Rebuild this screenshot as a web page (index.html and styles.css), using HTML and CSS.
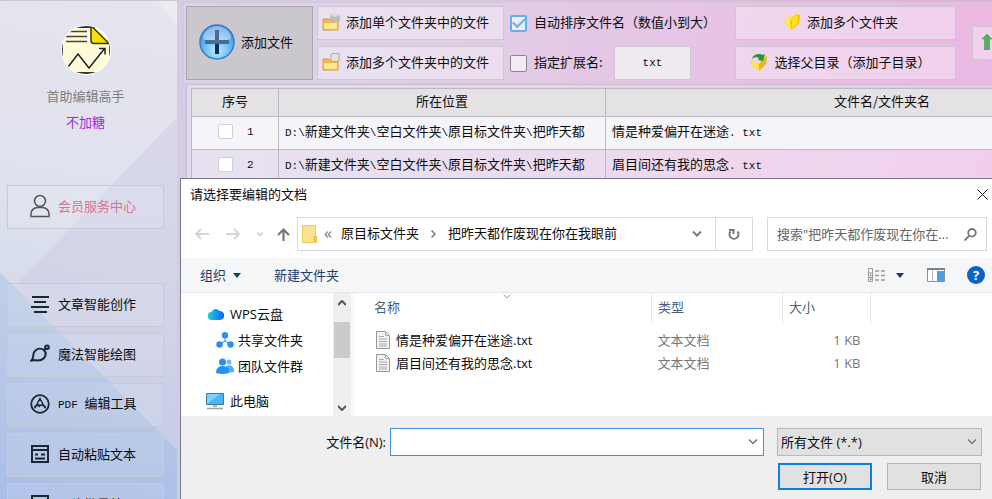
FILE: index.html
```
<!DOCTYPE html>
<html lang="zh-CN">

<head>
    <meta charset="UTF-8">
    <meta name="viewport" content="width=device-width, initial-scale=1">
    <title>首助编辑高手</title>
    <link rel="stylesheet" href="styles.css">
</head>

<body>

    <aside class="sidebar">
        <svg class="facets" viewBox="0 0 180 499" preserveAspectRatio="none" aria-hidden="true">
            <polygon points="160,0 180,0 180,24" fill="#ffffff" fill-opacity=".3" />
            <polygon points="180,116 50,250 14,286 180,450" fill="#cdc9e4" fill-opacity=".45" />
            <polygon points="0,272 14,286 180,450 180,499 0,499" fill="#93abdf" fill-opacity=".3" />
        </svg>

        <svg class="logo" viewBox="0 0 50 50" aria-hidden="true">
            <circle cx="25" cy="25" r="25" fill="#fff" />
            <clipPath id="disc">
                <circle cx="25" cy="25" r="24" />
            </clipPath>
            <g clip-path="url(#disc)">
                <rect x="1" y="2" width="48" height="46" fill="#fffbd8" stroke="#333" stroke-width="2" />
                <path d="M7 6.500H26M5 11.500H26M5 16.500H26" stroke="#444" stroke-width="1.500" />
                <path d="M30 2h1.500L48 18.500H33q-3 0-3-3z" fill="#f8e000" stroke="#333" stroke-width="1.500" />
                <path d="M7 42l10-13 11 14 16-20M38 23.500h6v6" fill="none" stroke="#222" stroke-width="1.500" />
            </g>
        </svg>
        <h1 class="app-name">首助编辑高手</h1>
        <p class="user-name">不加糖</p>

        <button class="side-btn member">
            <svg viewBox="0 0 20 24" fill="none" stroke="#555" stroke-width="1.500" aria-hidden="true">
                <circle cx="10" cy="7" r="5.500" />
                <path d="M1 22.500v-2.500a6.500 6.500 0 0 1 6.500-6.500h5a6.500 6.500 0 0 1 6.500 6.500v2.500z" />
            </svg>
            会员服务中心
        </button>

        <nav class="side-nav">
            <button class="side-btn">
                <svg viewBox="0 0 20 20" stroke="#1c2533" stroke-width="2" aria-hidden="true">
                    <path d="M2 3h17M4 8h12M1 13h18M4 18h13" />
                </svg>
                文章智能创作
            </button>
            <button class="side-btn">
                <svg viewBox="0 0 20 20" fill="none" stroke="#1c2533" stroke-width="2" aria-hidden="true">
                    <path d="M1.500 16.500C4.500 13.500 2 11 4.500 7.500 7 4 11 4 14 6c2.500 3 2 6-.5 8.500-3.500 3.500-7.500 1-12 2zM14 6l1.500-1.500" />
                    <circle cx="17" cy="3.200" r="1.800" />
                </svg>
                魔法智能绘图
            </button>
            <button class="side-btn">
                <svg viewBox="0 0 20 20" fill="none" stroke="#1c2533" stroke-width="1.800" aria-hidden="true">
                    <circle cx="10" cy="10" r="8.800" />
                    <path d="M5 14L10 4.500 15 14M5 14c-1-2 2-3 5-3s6 1 5 3M7.500 10.500L10 13" stroke-width="1.500" />
                </svg>
                <span><span class="mono">PDF </span>编辑工具</span>
            </button>
            <button class="side-btn">
                <svg viewBox="0 0 20 20" fill="none" stroke="#1c2533" stroke-width="2" aria-hidden="true">
                    <path d="M2 2h16v16H2zM2 6h16" />
                    <path d="M5 10.500h3M11 10.500h4M5 14.500h10" />
                </svg>
                自动粘贴文本
            </button>
            <button class="side-btn">
                <svg viewBox="0 0 20 20" fill="none" stroke="#1c2533" stroke-width="2" aria-hidden="true">
                    <path d="M2 2h16v16H2zM2 6h16M6 14l3-4 5 5" />
                </svg>
                图片批量处理
            </button>
        </nav>
    </aside>

    <main class="workspace">
        <section class="toolbar">
            <button class="add-file">
                <svg viewBox="0 0 36 36" aria-hidden="true">
                    <defs>
                        <radialGradient id="ball" cx=".5" cy=".75" r=".7">
                            <stop offset="0" stop-color="#b8f0ff" />
                            <stop offset=".6" stop-color="#63b4f4" />
                            <stop offset="1" stop-color="#3a86dc" />
                        </radialGradient>
                    </defs>
                    <circle cx="18" cy="18" r="17" fill="url(#ball)" stroke="#3b7cc4" stroke-width="1.500" />
                    <path d="M4 15a14 13 0 0 1 28 0q-14 5-28 0z" fill="#fff" fill-opacity=".4" />
                    <path d="M18 6v24M6 18h24" stroke="#4a6a90" stroke-width="4" />
                    <path d="M18 20v10" stroke="#0d2c55" stroke-width="4" />
                </svg>
                添加文件
            </button>

            <div class="stack folders">
                <button class="tool-btn">
                    <svg viewBox="0 0 18 18" aria-hidden="true">
                        <path d="M1 6h6l2 2h7v9H1z" fill="#f7b84b" stroke="#e09a3a" />
                        <path d="M8 2l5-1.500L18 2v6l-5 2-5-2z" fill="#bdbdbd" />
                        <path d="M8 2l5 2 5-2-5-1.500z" fill="#dedede" />
                        <path d="M2 10h13v6H2z" fill="#ffe98c" />
                    </svg>
                    添加单个文件夹中的文件
                </button>
                <button class="tool-btn">
                    <svg viewBox="0 0 18 18" aria-hidden="true">
                        <path d="M1 6h6l2 2h7v9H1z" fill="#f7b84b" stroke="#e09a3a" />
                        <path d="M9 1.500L11 .5h6v8h-8z" fill="#e4e4e4" stroke="#aaa" />
                        <path d="M2 10h13v6H2z" fill="#ffe98c" />
                    </svg>
                    添加多个文件夹中的文件
                </button>
            </div>

            <div class="stack options">
                <div class="option">
                    <input type="checkbox" id="autosort" checked>
                    <label for="autosort">自动排序文件名（数值小到大）</label>
                </div>
                <div class="option">
                    <input type="checkbox" id="useext">
                    <label for="useext">指定扩展名:</label>
                    <input type="text" class="ext" value="txt" aria-label="扩展名">
                </div>
            </div>

            <div class="stack parents">
                <button class="tool-btn">
                    <svg viewBox="0 0 18 18" aria-hidden="true">
                        <path d="M1 8l6-5 2 1 5-3 3 1-1 9-8 6z" fill="#f6c400" />
                        <path d="M1 8l6-5 2 1-2 5 1 8z" fill="#ffec4a" />
                        <path d="M9 5l5-3 1 1-1 8-5 4z" fill="#ffe02a" />
                    </svg>
                    添加多个文件夹
                </button>
                <button class="tool-btn">
                    <svg viewBox="0 0 18 18" aria-hidden="true">
                        <path d="M1 7l8 4 8-9-1 9-7 7-7-5z" fill="#e8b512" />
                        <path d="M1 7l8 4v7l-7-5z" fill="#ffe35a" />
                        <path d="M2 6c1-5 8-6 11-4l2-1-2 7-5-1 1-2c-2-1-5-1-7 1z" fill="#1f9a34" />
                    </svg>
                    选择父目录（添加子目录）
                </button>
            </div>

            <button class="tool-btn up" aria-label="上移">
                <svg viewBox="0 0 10 16" aria-hidden="true">
                    <path d="M5 0l5 5H7.500v11h-5V5H0z" fill="#5cae5c" stroke="#3d8e46" stroke-width=".5" />
                </svg>
            </button>
        </section>

        <section class="file-panel">
            <table class="file-table">
                <thead>
                    <tr>
                        <th class="col-no">序号</th>
                        <th class="col-path">所在位置</th>
                        <th class="col-name">文件名/文件夹名</th>
                    </tr>
                </thead>
                <tbody>
                    <tr>
                        <td class="no"><label><input type="checkbox"><span class="mono">1</span></label></td>
                        <td><span class="mono">D:\</span>新建文件夹<span class="mono">\</span>空白文件夹<span class="mono">\</span>原目标文件夹<span class="mono">\</span>把昨天都</td>
                        <td>情是种爱偏开在迷途<span class="mono">. txt</span></td>
                    </tr>
                    <tr>
                        <td class="no"><label><input type="checkbox"><span class="mono">2</span></label></td>
                        <td><span class="mono">D:\</span>新建文件夹<span class="mono">\</span>空白文件夹<span class="mono">\</span>原目标文件夹<span class="mono">\</span>把昨天都</td>
                        <td>眉目间还有我的思念<span class="mono">. txt</span></td>
                    </tr>
                </tbody>
            </table>
        </section>
    </main>

    <!-- file picker window -->
    <div class="dialog" role="dialog" aria-labelledby="dialog-title">
        <header class="title-bar">
            <h2 id="dialog-title">请选择要编辑的文档</h2>
            <button class="plain" aria-label="关闭">
                <svg width="11" height="11" viewBox="0 0 11 11" stroke="#222" aria-hidden="true">
                    <path d="M.5 .5l10 10M10.500 .5l-10 10" />
                </svg>
            </button>
        </header>

        <div class="nav-bar">
            <div class="arrows">
                <button class="plain" aria-label="后退">
                    <svg width="14" height="12" viewBox="0 0 14 12" fill="none" stroke="#d4d4d4" stroke-width="1.800" aria-hidden="true">
                        <path d="M14 6H1M6 1L1 6l5 5" />
                    </svg>
                </button>
                <button class="plain" aria-label="前进">
                    <svg width="14" height="12" viewBox="0 0 14 12" fill="none" stroke="#d4d4d4" stroke-width="1.800" aria-hidden="true">
                        <path d="M0 6h13M8 1l5 5-5 5" />
                    </svg>
                </button>
                <button class="plain" aria-label="最近位置">
                    <svg width="6" height="4" viewBox="0 0 6 4" fill="none" stroke="#ccc" stroke-width="1.500" aria-hidden="true">
                        <path d="M0 .5l3 3 3-3" />
                    </svg>
                </button>
                <button class="plain" aria-label="上一级">
                    <svg width="13" height="13" viewBox="0 0 13 13" fill="none" stroke="#777" stroke-width="2.200" aria-hidden="true">
                        <path d="M6.500 13V1.500M1 7l5.500-5.500L12 7" />
                    </svg>
                </button>
            </div>
            <div class="address">
                <svg width="15" height="18" viewBox="0 0 15 18" aria-hidden="true">
                    <path d="M.5 .5h13v10l1 1v6H.5z" fill="#ffe392" stroke="#f0c95c" />
                    <path d="M11.500 11h3v6.500h-3z" fill="#eec142" />
                </svg>
                <span class="sep">«</span>
                <a href="#">原目标文件夹</a>
                <svg class="crumb" width="5" height="8" viewBox="0 0 5 8" fill="none" stroke="#777" stroke-width="1.500" aria-hidden="true">
                    <path d="M.5 .5L4 4 .5 7.500" />
                </svg>
                <a href="#">把昨天都作废现在你在我眼前</a>
                <button class="plain drop" aria-label="历史位置">
                    <svg width="10" height="6" viewBox="0 0 10 6" fill="none" stroke="#777" stroke-width="2" aria-hidden="true">
                        <path d="M1 .5l4 4 4-4" />
                    </svg>
                </button>
                <button class="plain refresh" aria-label="刷新">
                    <svg width="12" height="13" viewBox="0 0 12 13" fill="none" stroke="#777" stroke-width="2" aria-hidden="true">
                        <path d="M2.500 3.500a4.500 4.500 0 1 0 7 0M1 2h4.500v4" />
                    </svg>
                </button>
            </div>
            <div class="search">
                <input type="text" placeholder="搜索&quot;把昨天都作废现在你在..." aria-label="搜索">
                <svg width="13" height="13" viewBox="0 0 13 13" fill="none" stroke="#777" stroke-width="1.800" aria-hidden="true">
                    <circle cx="8" cy="4.800" r="3.800" />
                    <path d="M5.500 7.500L.5 12.500" />
                </svg>
            </div>
        </div>

        <div class="command-bar">
            <button class="plain">组织 <svg width="8" height="5" viewBox="0 0 8 5" fill="#1e3c68" aria-hidden="true"><path d="M0 0h8L4 5z" /></svg></button>
            <button class="plain">新建文件夹</button>
            <button class="plain views" aria-label="更改视图">
                <svg width="18" height="14" viewBox="0 0 18 14" fill="none" stroke="#999" aria-hidden="true">
                    <path d="M.5 .5h4v13h-4zM.5 5h4M.5 9.500h4" />
                    <path d="M7 3h4M13 3h4M7 7.500h4M13 7.500h4M7 12h4M13 12h4" stroke-width="1.500" />
                    <path d="M2 7.500h1.500" stroke="#3b8ee0" stroke-width="1.500" />
                    <path d="M2 11.500h1.500" stroke="#e05040" stroke-width="1.500" />
                </svg>
                <svg width="8" height="5" viewBox="0 0 8 5" fill="#1e3c68" aria-hidden="true"><path d="M0 0h8L4 5z" /></svg>
            </button>
            <button class="plain" aria-label="预览窗格">
                <svg width="18" height="14" viewBox="0 0 18 14" aria-hidden="true">
                    <path d="M.5 .5h17v13H.5z" fill="#fff" stroke="#8a929c" />
                    <path d="M0 1h18" stroke="#7a828c" stroke-width="2" />
                    <path d="M5.500 2v11" stroke="#b0b6bd" />
                    <path d="M10 3h7v10h-7z" fill="#4a9fe8" />
                </svg>
            </button>
            <button class="plain help" aria-label="帮助">?</button>
        </div>

        <div class="browser">
            <ul class="tree">
                <li>
                    <svg width="16" height="12" viewBox="0 0 16 12" aria-hidden="true">
                        <defs>
                            <linearGradient id="cloud">
                                <stop offset="0" stop-color="#18d8d0" />
                                <stop offset=".5" stop-color="#1c96f4" />
                                <stop offset="1" stop-color="#0a60e8" />
                            </linearGradient>
                        </defs>
                        <path d="M4 12a4 4 0 0 1-.5-8A4.500 4.500 0 0 1 11.500 3a4.500 4.500 0 0 1 .5 9z" fill="url(#cloud)" />
                    </svg>
                    WPS云盘
                </li>
                <li class="child">
                    <svg width="18" height="16" viewBox="0 0 18 16" fill="#2f8cf5" aria-hidden="true">
                        <path d="M9 4v5L4 12M9 9l5 3" fill="none" stroke="#2f8cf5" />
                        <circle cx="9" cy="3.300" r="3.200" />
                        <circle cx="3.500" cy="12.500" r="3.200" />
                        <circle cx="14.500" cy="12.500" r="3.200" />
                    </svg>
                    共享文件夹
                </li>
                <li class="child">
                    <svg width="18" height="16" viewBox="0 0 18 16" fill="#2190fa" aria-hidden="true">
                        <circle cx="13" cy="4" r="2.500" fill="#6db9ff" />
                        <path d="M9 15V9q4-3 7-1 2 2 2 6z" fill="#55aaff" />
                        <circle cx="6.500" cy="4" r="3.500" />
                        <path d="M0 15q0-7 6.500-7T13 15q-6.500 2-13 0z" />
                    </svg>
                    团队文件群
                </li>
                <li class="pc">
                    <svg width="18" height="17" viewBox="0 0 18 17" aria-hidden="true">
                        <path d="M.5 .5h17v11H.5z" fill="#49b4f8" stroke="#4a7794" />
                        <path d="M1 11V1h13z" fill="#7dd0ff" />
                        <path d="M7 12h4v2H7z" fill="#9bb" />
                        <path d="M1 15.500h16" stroke="#8fa6b2" stroke-width="1.500" />
                    </svg>
                    此电脑
                </li>
            </ul>
            <div class="scrollbar" aria-hidden="true">
                <svg width="8" height="6" viewBox="0 0 8 6" fill="none" stroke="#555" stroke-width="2"><path d="M0 5l4-4 4 4" /></svg>
                <div class="thumb"></div>
                <svg width="8" height="6" viewBox="0 0 8 6" fill="none" stroke="#555" stroke-width="2"><path d="M0 1l4 4 4-4" /></svg>
            </div>
            <div class="listing">
                <table>
                    <thead>
                        <tr>
                            <th class="l-name">名称
                                <svg class="sort" width="8" height="5" viewBox="0 0 8 5" fill="none" stroke="#999" aria-hidden="true"><path d="M.5 .5L4 4 7.500 .5" /></svg>
                            </th>
                            <th class="l-type">类型</th>
                            <th class="l-size">大小</th>
                        </tr>
                    </thead>
                    <tbody>
                        <tr>
                            <td class="doc">
                                <svg width="14" height="18" viewBox="0 0 14 18" aria-hidden="true">
                                    <path d="M.5 .5h9l4 4v13H.5z" fill="#f2f2f2" stroke="#999" />
                                    <path d="M9.500 .5v4h4M3 5.500h5M3 8h8M3 10.500h8M3 13h8M3 15h8" fill="none" stroke="#aaa" />
                                </svg>
                                情是种爱偏开在迷途.txt
                            </td>
                            <td>文本文档</td>
                            <td class="size">1 KB</td>
                        </tr>
                        <tr>
                            <td class="doc">
                                <svg width="14" height="18" viewBox="0 0 14 18" aria-hidden="true">
                                    <path d="M.5 .5h9l4 4v13H.5z" fill="#f2f2f2" stroke="#999" />
                                    <path d="M9.500 .5v4h4M3 5.500h5M3 8h8M3 10.500h8M3 13h8M3 15h8" fill="none" stroke="#aaa" />
                                </svg>
                                眉目间还有我的思念.txt
                            </td>
                            <td>文本文档</td>
                            <td class="size">1 KB</td>
                        </tr>
                    </tbody>
                </table>
            </div>
        </div>

        <footer class="dialog-footer">
            <label for="filename">文件名(N):</label>
            <div class="combo">
                <input type="text" id="filename">
                <button class="plain" aria-label="展开">
                    <svg width="10" height="6" viewBox="0 0 10 6" fill="none" stroke="#777" stroke-width="1.500" aria-hidden="true"><path d="M1 .5l4 4 4-4" /></svg>
                </button>
            </div>
            <div class="select-wrap">
                <select aria-label="文件类型">
                    <option>所有文件 (*.*)</option>
                </select>
                <svg width="10" height="6" viewBox="0 0 10 6" fill="none" stroke="#777" stroke-width="1.500" aria-hidden="true"><path d="M1 .5l4 4 4-4" /></svg>
            </div>
            <div class="actions">
                <button class="action open">打开(O)</button>
                <button class="action">取消</button>
            </div>
        </footer>
    </div>

</body>

</html>
```
FILE: styles.css
```
* {
    box-sizing: border-box;
}

body {
    margin: 0;
    height: 100vh;
    overflow: hidden;
    position: relative;
    display: flex;
    font-family: "Noto Sans CJK SC", sans-serif;
    font-size: 13px;
    line-height: 20px;
    color: #0c0c0c;
    background: linear-gradient(100deg, #d3cde6 0%, #d9c9e4 35%, #e2bae1 65%, #e8a8de 100%);
}

h1,
h2,
p,
ul {
    margin: 0;
    padding: 0;
    font-size: 13px;
    font-weight: normal;
}

button,
input,
select {
    font: inherit;
    color: inherit;
    margin: 0;
    padding: 0;
}

svg {
    display: block;
    flex: none;
}

a {
    color: inherit;
    text-decoration: none;
}

table {
    border-collapse: collapse;
    table-layout: fixed;
}

th,
td {
    font-weight: normal;
    padding: 0;
}

.mono {
    font-family: "Liberation Mono", monospace;
    font-size: 11px;
    white-space: pre;
}

/* sidebar */

.sidebar {
    flex: none;
    width: 179px;
    height: 100vh;
    overflow: hidden;
    position: relative;
    z-index: 0;
    display: flex;
    flex-direction: column;
    align-items: center;
    padding: 24px 13px 0 7px;
    border-top: 1px solid #c8c8d0;
    border-right: 2px solid #cfcfdc;
    background: linear-gradient(190deg, #e7e4ed 0%, #dfe2ee 40%, #d4dbeb 62%, #b4c6ea 100%);
}

.facets {
    position: absolute;
    z-index: -1;
    top: 0;
    left: 0;
    width: 100%;
    height: 100%;
}

.logo {
    width: 50px;
    height: 50px;
}

.app-name {
    margin-top: 11px;
    color: #808080;
}

.user-name {
    margin: 6px 0 53px;
    color: #9a2bd8;
}

.side-btn {
    flex: none;
    width: 100%;
    height: 44px;
    display: flex;
    align-items: center;
    gap: 8px;
    padding: 0 0 2px 22px;
    border: 1px solid #c9cbd2;
    background: rgba(255, 255, 255, .1);
    white-space: nowrap;
}

.side-btn svg {
    width: 20px;
    height: 20px;
}

.side-btn.member {
    color: #e0708f;
}

.side-btn.member svg {
    height: 24px;
}

.side-nav {
    width: 100%;
    margin-top: 54px;
    display: flex;
    flex-direction: column;
    gap: 6px;
}

/* toolbar */

.workspace {
    flex: 1;
    min-width: 0;
    height: 100vh;
    display: flex;
    flex-direction: column;
    padding: 2px 0 0 4px;
    overflow: hidden;
}

.toolbar {
    flex: none;
    display: flex;
    align-items: flex-start;
    gap: 4px;
    padding: 3px 3px 3px 2px;
    border: 1px solid #d3cbd8;
    border-right: 0;
    background: rgba(255, 255, 255, .15);
    white-space: nowrap;
}

.toolbar > * {
    flex: none;
}

.add-file {
    width: 127px;
    height: 74px;
    display: flex;
    align-items: center;
    gap: 6px;
    padding: 0 0 2px 12px;
    border: 1px solid #a9a6ad;
    background: #cbc7cf;
}

.add-file svg {
    width: 36px;
    height: 36px;
}

.stack {
    display: flex;
    flex-direction: column;
    gap: 6px;
}

.tool-btn {
    height: 34px;
    display: flex;
    align-items: center;
    justify-content: center;
    gap: 6px;
    padding: 0 10px 2px 0;
    border: 1px solid #cfc6d2;
    background: rgba(255, 255, 255, .35);
}

.tool-btn svg {
    width: 18px;
    height: 18px;
}

.folders {
    width: 187px;
}

.options {
    width: 223px;
    padding-left: 2px;
}

.option {
    height: 34px;
    display: flex;
    align-items: center;
    gap: 7px;
}

.option label {
    padding-bottom: 2px;
}

.option input[type=checkbox] {
    appearance: none;
    width: 17px;
    height: 17px;
    border: 1px solid #888;
    border-radius: 2px;
    background: rgba(255, 255, 255, .6);
}

.option input[type=checkbox]:checked {
    border: 2px solid #5db4ec;
    display: grid;
    place-items: center;
}

.option input[type=checkbox]:checked::before {
    content: "";
    width: 10px;
    height: 5px;
    margin-bottom: 3px;
    border: solid #5db4ec;
    border-width: 0 0 2px 2px;
    transform: rotate(-45deg);
}

.ext {
    width: 77px;
    height: 34px;
    margin: 0 40px 0 auto;
    border: 1px solid #cfc8d2;
    background: #efe9f0;
    font-family: "Liberation Mono", monospace;
    font-size: 11px;
    text-align: center;
}

.parents {
    width: 221px;
}

.tool-btn.up {
    width: 34px;
    margin: 20px 0 0 12px;
    padding-right: 4px;
}

.tool-btn.up svg {
    width: 10px;
    height: 16px;
}

/* file table behind the dialog */

.file-panel {
    flex: 1;
    margin-left: 3px;
    padding: 3px 0 0 4px;
    border: 1px solid #c6c0cc;
    border-right: 0;
    background: rgba(255, 255, 255, .3);
}

.file-table {
    width: 968px;
}

.file-table th,
.file-table td {
    border: 1px solid #bdb9c1;
}

.file-table th {
    height: 28px;
    padding-bottom: 4px;
    background: #e5e2e5;
}

.file-table td {
    height: 33px;
    padding: 0 0 3px 6px;
    white-space: nowrap;
    background: rgba(255, 255, 255, .2);
}

.file-table tr:first-child td {
    background: #f5f4f8;
}

.col-no {
    width: 87px;
}

.col-path {
    width: 327px;
}

.no label {
    display: flex;
    align-items: center;
    gap: 14px;
    padding-left: 20px;
}

.no input {
    appearance: none;
    width: 15px;
    height: 15px;
    border: 1px solid #d0d0d4;
    border-radius: 2px;
    background: #fff;
}

/* dialog */

.dialog {
    position: absolute;
    top: 178px;
    left: 180px;
    right: 0;
    bottom: 0;
    display: flex;
    flex-direction: column;
    border: solid #77758a;
    border-width: 1px 0 0 1px;
    background: #fff;
    font-family: "Open Sans", "Noto Sans CJK SC", sans-serif;
}

.plain {
    border: 0;
    background: none;
    display: flex;
    align-items: center;
}

.title-bar {
    flex: none;
    height: 32px;
    padding: 0 4px 2px 9px;
    display: flex;
    align-items: center;
    justify-content: space-between;
}

.nav-bar {
    flex: none;
    display: flex;
    gap: 14px;
    padding: 6px 5px 7px 14px;
}

.arrows {
    display: flex;
    align-items: center;
    gap: 17px;
    width: 88px;
}

.arrows button + button + button {
    margin-right: -3px;
}

.address {
    flex: 1;
    height: 34px;
    display: flex;
    align-items: center;
    border: 1px solid #d9d9d9;
    padding-left: 4px;
    white-space: nowrap;
}

.address a {
    padding-bottom: 2px;
}

.sep {
    margin: 0 9px 2px 7px;
    font-size: 16px;
    color: #777;
}

.crumb {
    margin: 0 12px;
}

.drop {
    margin-left: auto;
    padding: 0 13px;
}

.refresh {
    width: 37px;
    height: 100%;
    justify-content: center;
    border-left: 1px solid #d9d9d9;
}

.search {
    width: 220px;
    height: 34px;
    display: flex;
    align-items: center;
    gap: 8px;
    padding: 0 9px;
    border: 1px solid #d9d9d9;
}

.search input {
    flex: 1;
    min-width: 0;
    border: 0;
    outline: 0;
    background: none;
}

.search input::placeholder {
    color: #666;
}

.command-bar {
    flex: none;
    height: 35px;
    display: flex;
    align-items: center;
    padding: 0 7px 0 19px;
    border-bottom: 1px solid #e6e8ec;
    background: #f4f6f8;
    color: #1e3c68;
}

.command-bar svg + svg {
    margin-left: 10px;
}

.command-bar button {
    gap: 7px;
    margin-right: 33px;
}

.command-bar .views {
    gap: 0;
    margin: 0 23px 0 auto;
}

.command-bar .views + button {
    margin-right: 22px;
}

.command-bar .help {
    width: 18px;
    height: 18px;
    margin: 0;
    justify-content: center;
    border-radius: 50%;
    background: #0a64c4;
    color: #fff;
    font-weight: bold;
}

.browser {
    flex: 1;
    min-height: 0;
    display: flex;
}

.tree {
    width: 152px;
    padding-top: 8px;
    list-style: none;
}

.tree li {
    height: 26px;
    display: flex;
    align-items: center;
    gap: 6px;
    padding-left: 27px;
}

.tree .child {
    gap: 4px;
    padding-left: 35px;
}

.tree .pc {
    margin-top: 9px;
    padding-left: 25px;
}

.scrollbar {
    width: 18px;
    display: flex;
    flex-direction: column;
    align-items: center;
    padding: 7px 0 5px;
    background: #efefef;
}

.scrollbar .thumb {
    width: 16px;
    height: 36px;
    margin: 16px 0 auto;
    background: #cbcbcb;
}

.listing {
    flex: 1;
    border-left: 4px solid #fafafa;
}

.listing table {
    width: 516px;
}

.listing th {
    height: 30px;
    padding: 0 0 2px 6px;
    text-align: left;
    border-right: 1px solid #e4e6ea;
    color: #4a5f80;
}

.listing .l-name {
    padding-left: 19px;
    position: relative;
}

.sort {
    position: absolute;
    top: 1px;
    left: 50%;
}

.l-type {
    width: 131px;
}

.l-size {
    width: 88px;
}

.listing tbody::before {
    content: "";
    display: block;
    height: 5px;
}

.listing td {
    height: 23px;
    padding-left: 6px;
    color: #777;
}

.listing .doc {
    display: flex;
    align-items: center;
    gap: 6px;
    padding-left: 21px;
    color: #0c0c0c;
}

.listing .size {
    padding: 0 10px 0 0;
    text-align: right;
}

.dialog-footer {
    flex: none;
    display: grid;
    grid-template-columns: 205px 1fr 205px;
    gap: 7px 4px;
    padding: 12px 10px 9px 0;
    background: #efefef;
}

.dialog-footer label {
    align-self: center;
    text-align: right;
}

.combo {
    height: 28px;
    margin-right: 9px;
    display: flex;
    align-items: center;
    padding: 0 5px;
    border: 1px solid #3c93dc;
    background: #fff;
}

.combo input {
    flex: 1;
    min-width: 0;
    border: 0;
    outline: 0;
}

.select-wrap {
    display: grid;
    align-items: center;
}

.select-wrap > * {
    grid-area: 1 / 1;
}

.select-wrap svg {
    justify-self: end;
    margin-right: 5px;
    pointer-events: none;
}

.select-wrap select {
    appearance: none;
    width: 100%;
    height: 28px;
    padding-left: 3px;
    border: 1px solid #b8b8b8;
    border-radius: 0;
    background: #e1e1e1;
}

.actions {
    grid-column: 3;
    display: grid;
    grid-template-columns: 1fr 1fr;
    gap: 15px;
    padding: 0 1px;
}

.action {
    height: 27px;
    border: 1px solid #b4b4b4;
    background: #e1e1e1;
}

.action.open {
    border: 2px solid #0f7fdc;
}
```
